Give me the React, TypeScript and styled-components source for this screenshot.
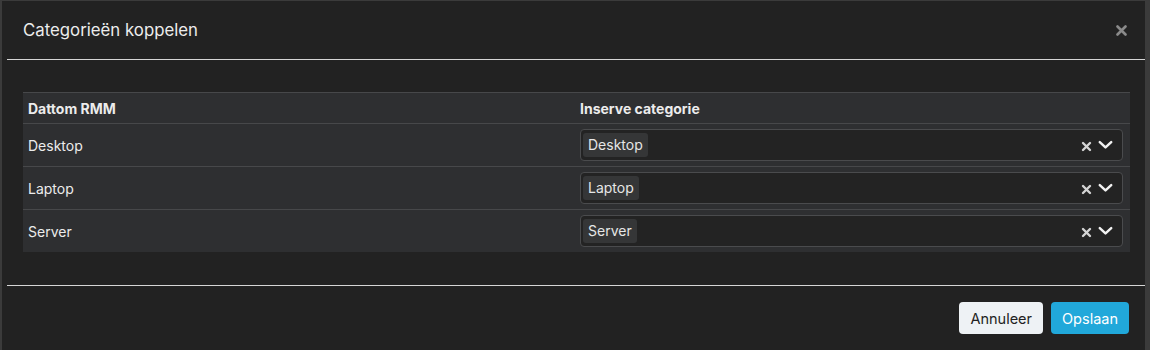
import styled, { createGlobalStyle } from "styled-components";

const GlobalStyle = createGlobalStyle`
    html, body {
        margin: 0;
        padding: 0;
        background: #3b3b3b;
        font-family: Inter, "Noto Sans", sans-serif;
        -webkit-font-smoothing: antialiased;
    }
`;

type Row = { source: string; target: string };

const rows: Row[] = [
    { source: "Desktop", target: "Desktop" },
    { source: "Laptop", target: "Laptop" },
    { source: "Server", target: "Server" },
];

const ClearIcon = () => (
    <svg width="11" height="11" viewBox="0 0 11 11">
        <path d="M2 2 L9 9 M9 2 L2 9" stroke="currentColor" strokeWidth="2.4" strokeLinecap="round" />
    </svg>
);

const ChevronIcon = () => (
    <svg width="15" height="10" viewBox="0 0 15 10">
        <path d="M1.8 2.2 L7.5 7.4 L13.2 2.2" stroke="currentColor" strokeWidth="2.5" fill="none" strokeLinecap="round" strokeLinejoin="round" />
    </svg>
);

export default function App() {
    return (
        <>
            <GlobalStyle />
            <Modal>
                <Header>
                    <Title>Categorieën koppelen</Title>
                    <CloseButton aria-label="Sluiten">
                        <svg width="11" height="11" viewBox="0 0 11 11">
                            <path d="M1.5 1.5 L9.5 9.5 M9.5 1.5 L1.5 9.5" stroke="currentColor" strokeWidth="2.6" strokeLinecap="round" />
                        </svg>
                    </CloseButton>
                </Header>
                <Divider />
                <Body>
                    <Table>
                        <thead>
                            <tr>
                                <HeadCell $width={552}>Dattom RMM</HeadCell>
                                <HeadCell>Inserve categorie</HeadCell>
                            </tr>
                        </thead>
                        <tbody>
                            {rows.map((row) => (
                                <tr key={row.source}>
                                    <Cell>{row.source}</Cell>
                                    <Cell $select>
                                        <Select>
                                            <Chip>{row.target}</Chip>
                                            <Indicators>
                                                <Clear><ClearIcon /></Clear>
                                                <Chevron><ChevronIcon /></Chevron>
                                            </Indicators>
                                        </Select>
                                    </Cell>
                                </tr>
                            ))}
                        </tbody>
                    </Table>
                </Body>
                <Divider />
                <Footer>
                    <Button>Annuleer</Button>
                    <Button $primary>Opslaan</Button>
                </Footer>
            </Modal>
        </>
    );
}

const Modal = styled.div`
    margin: 1px 0 0 2px;
    width: 1143px;
    height: 349px;
    background: #222222;
    box-sizing: border-box;
    display: flex;
    flex-direction: column;
`;

const Header = styled.div`
    height: 58px;
    display: flex;
    align-items: center;
    justify-content: space-between;
    padding: 0 18px 0 21px;
`;

const Title = styled.h2`
    margin: 0;
    font-size: 16.8px;
    font-weight: 400;
    color: #ececec;
`;

const CloseButton = styled.button`
    background: none;
    border: 0;
    padding: 0;
    color: #8a8a8a;
    display: flex;
    cursor: pointer;
`;

const Divider = styled.div`
    height: 1px;
    margin-left: 5px;
    background: #d6d6d6;
`;

const Body = styled.div`
    padding: 32px 15px 0 21px;
    height: 225px;
    box-sizing: border-box;
`;

const Table = styled.table`
    width: 100%;
    border-collapse: collapse;
    background: #2e2f31;
    font-size: 14px;
    color: #ececec;
`;

const HeadCell = styled.th<{ $width?: number }>`
    text-align: left;
    font-weight: 700;
    height: 30px;
    padding: 0 5px;
    width: ${(p) => (p.$width ? `${p.$width - 10}px` : "auto")};
    border-top: 1px solid #47484a;
    border-bottom: 1px solid #47484a;
`;

const Cell = styled.td<{ $select?: boolean }>`
    height: 42px;
    padding: ${(p) => (p.$select ? "0 7px 0 5px" : "0 5px")};
    border-bottom: 1px solid #47484a;

    tr:last-child & {
        border-bottom: 0;
    }
`;

const Select = styled.div`
    height: 32px;
    box-sizing: border-box;
    border: 1px solid #4a4b4d;
    border-radius: 4px;
    background: #232323;
    display: flex;
    align-items: center;
    padding: 0 9px 0 2px;
`;

const Chip = styled.span`
    background: #353637;
    border-radius: 3px;
    padding: 3px 5px 4px;
    font-size: 14px;
    color: #e6e6e6;
`;

const Indicators = styled.div`
    margin-left: auto;
    display: flex;
    align-items: center;
    gap: 6px;
`;

const Clear = styled.span`
    color: #d4d4d4;
    display: flex;
    margin-top: 2px;
`;

const Chevron = styled.span`
    color: #f2f2f2;
    display: flex;
`;

const Footer = styled.div`
    flex: 1;
    display: flex;
    justify-content: flex-end;
    align-items: center;
    gap: 8px;
    padding: 0 16px 0 0;
`;

const Button = styled.button<{ $primary?: boolean }>`
    height: 32px;
    padding: 0 11px;
    border: 0;
    border-radius: 4px;
    font-family: inherit;
    font-size: 14.5px;
    background: ${(p) => (p.$primary ? "#21a8da" : "#eef2f5")};
    color: ${(p) => (p.$primary ? "#ffffff" : "#222222")};
    cursor: pointer;
`;
